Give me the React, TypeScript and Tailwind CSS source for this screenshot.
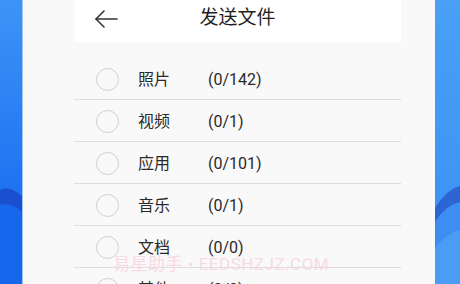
import { useState } from "react";

type Category = {
  name: string;
  count: string;
};

const categories: Category[] = [
  { name: "照片", count: "(0/142)" },
  { name: "视频", count: "(0/1)" },
  { name: "应用", count: "(0/101)" },
  { name: "音乐", count: "(0/1)" },
  { name: "文档", count: "(0/0)" },
  { name: "其他", count: "(0/0)" },
];

const font = { fontFamily: 'Roboto, "Noto Sans CJK SC", sans-serif' };

function SideWave({ side }: { side: "left" | "right" }) {
  const left = side === "left";
  return (
    <svg className="h-full w-full" viewBox="0 0 40 284" preserveAspectRatio="none">
      <defs>
        <linearGradient id={`bg-${side}`} x1="0" y1="0" x2="0" y2="1">
          <stop offset="0" stopColor={left ? "#3f93f6" : "#4aa0f7"} />
          <stop offset="0.6" stopColor={left ? "#2276f2" : "#3f96f5"} />
          <stop offset="1" stopColor={left ? "#1565ee" : "#3a8ff2"} />
        </linearGradient>
      </defs>
      <rect width="40" height="284" fill={`url(#bg-${side})`} />
      {left ? (
        <>
          <path d="M0 190 C12 186 28 190 40 196 L40 284 L0 284 Z" fill="#1b4fd0" />
          <path d="M0 205 C14 202 28 206 40 212 L40 284 L0 284 Z" fill="#1766ec" />
        </>
      ) : (
        <>
          <path d="M0 208 C12 196 26 188 40 186 L40 284 L0 284 Z" fill="#2c64d4" />
          <path d="M0 222 C12 210 26 204 40 202 L40 284 L0 284 Z" fill="#3d8df2" />
          <path d="M0 248 C12 238 26 232 40 230 L40 284 L0 284 Z" fill="#4a9cf5" />
        </>
      )}
    </svg>
  );
}

export default function App() {
  const [selected, setSelected] = useState<string[]>([]);

  const toggle = (name: string) =>
    setSelected((s) => (s.includes(name) ? s.filter((n) => n !== name) : [...s, name]));

  return (
    <div className="flex h-[284px] w-[460px] overflow-hidden" style={font}>
      <div className="w-[23px] shrink-0 border-r border-[#9cc6f8]">
        <SideWave side="left" />
      </div>

      <div className="relative w-[412px] shrink-0 bg-[#f9f9f9] pl-[51px] pr-[34px]">
        <div className="relative flex h-[42px] items-center justify-center bg-white">
          <button className="absolute left-[20px] top-[8px] flex h-[22px] w-[24px] items-center">
            <svg className="h-[20px] w-[24px]" viewBox="0 0 24 20" fill="none">
              <path d="M23 10H2" stroke="#333" strokeWidth="1.6" strokeLinecap="round" />
              <path d="M10 2L2 10L10 18" stroke="#333" strokeWidth="1.6" strokeLinecap="round" strokeLinejoin="round" />
            </svg>
          </button>
          <h1 className="-mt-[5px] text-[19px] text-[#1f1f1f]">发送文件</h1>
        </div>

        <div className="mt-[16px]">
          {categories.map((c) => (
            <div
              key={c.name}
              onClick={() => toggle(c.name)}
              className="flex h-[42px] cursor-pointer items-center border-b border-[#dedede] pt-[3px]"
            >
              <span
                className={`-mt-[2px] ml-[22px] h-[23px] w-[23px] shrink-0 rounded-full border-[1.5px] ${
                  selected.includes(c.name) ? "border-[#2a7ff5] bg-[#2a7ff5]" : "border-[#cfcfcf]"
                }`}
              />
              <span className="ml-[19px] w-[70px] text-[16px] text-[#2a2a2a]">{c.name}</span>
              <span className="text-[16px] text-[#2a2a2a]">{c.count}</span>
            </div>
          ))}
        </div>

        <div className="pointer-events-none absolute left-[90px] top-[256px] text-[17px] leading-none tracking-[0.5px] text-[#f8d3de] opacity-80">
          易星助手 • EEDSHZJZ.COM
        </div>
      </div>

      <div className="flex-1">
        <SideWave side="right" />
      </div>
    </div>
  );
}
